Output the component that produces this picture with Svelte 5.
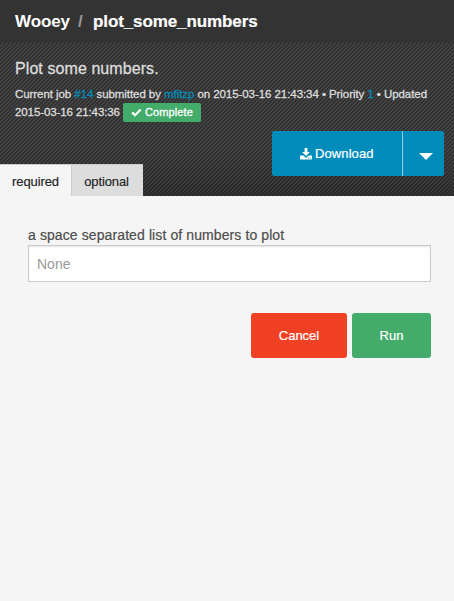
<script>
  let tab = $state('required');
</script>

<div class="page">
  <nav><b class="brand">Wooey</b><b class="slash">/</b><b class="name">plot_some_numbers</b></nav>
  <header>
    <h1>Plot some numbers.</h1>
    <p class="line1">Current job <a>#14</a> submitted by <a>mfitzp</a> on 2015-03-16 21:43:34 • Priority <a>1</a> • Updated</p>
    <p class="line2"><span>2015-03-16 21:43:36</span><span class="label"><svg width="11" height="9" viewBox="0 0 11 9"><path d="M1.2 4.4 4 7.2 9.7 1.5" fill="none" stroke="#fff" stroke-width="2.3" /></svg><span>Complete</span></span></p>
    <div class="download">
      <button class="main"><svg width="12" height="12" viewBox="0 0 12 12"><path fill="#fff" d="M4.6 0h2.8v4h2.5L6 8 2.1 4h2.5zM.5 7.6h2.9L6 10l2.6-2.4h2.9q.5 0 .5.5v2.7q0 .6-.6.6H.6q-.6 0-.6-.6V8.1q0-.5.5-.5z" /><path fill="#008cba" d="M8 9.6h.9v.8H8zM9.8 9.6h.9v.8h-.9z" /></svg><span>Download</span></button>
      <button class="more" aria-label="More"><i></i></button>
    </div>
    <div class="tabs">
      <button class:active={tab === 'required'} class="required" onclick={() => (tab = 'required')}>required</button>
      <button class:active={tab === 'optional'} class="optional" onclick={() => (tab = 'optional')}>optional</button>
    </div>
  </header>
  <main>
    <label for="numbers">a space separated list of numbers to plot</label>
    <input id="numbers" placeholder="None" />
    <div class="actions"><button class="cancel">Cancel</button><button class="run">Run</button></div>
  </main>
</div>

<style>
  :global(body) { margin: 0; background: #f5f5f5; }
  .page { font-family: "Liberation Sans", Arial, sans-serif; min-height: 601px; background: #f5f5f5; }
  .page * { box-sizing: border-box; }
  button { font: inherit; border: 0; padding: 0; margin: 0; color: #fff; white-space: nowrap; }
  nav { height: 43px; background: #333; color: #fff; font-size: 17px; line-height: 43px; padding-left: 15px; display: flex; white-space: nowrap; }
  .brand { width: 63px; letter-spacing: -.1px; }
  .slash { width: 15px; color: #999; }
  .name { letter-spacing: -.1px; -webkit-text-stroke: .2px; }
  header {
    height: 153px; padding: 15px 10px 0 0; display: flex; flex-direction: column; color: #ddd;
    background:
      linear-gradient(to bottom, transparent 70%, rgba(0, 0, 0, .18)),
      linear-gradient(135deg, #303030 25%, #434343 25% 50%, #303030 50% 75%, #434343 75%) 0 0 / 4px 4px;
  }
  h1 { margin: 0 0 0 15px; height: 22px; line-height: 22px; font-size: 16px; font-weight: 400; letter-spacing: .08px; -webkit-text-stroke: .3px; }
  p { margin: 0 0 0 15px; font-size: 11.5px; white-space: nowrap; letter-spacing: -.065px; -webkit-text-stroke: .3px; }
  .line1 { height: 18px; line-height: 18px; margin-top: 5px; }
  .line2 { height: 18px; display: flex; align-items: center; }
  .line2 > span:first-child { width: 108px; letter-spacing: -.1px; }
  a { color: #008cba; }
  .label { height: 19px; width: 78px; background: #43ac6a; border-radius: 2px; color: #fff; display: flex; align-items: center; padding-left: 8px; gap: 3px; font-size: 11px; letter-spacing: .1px; }
  .download { align-self: flex-end; display: flex; height: 45px; width: 172px; margin-top: 10px; border-radius: 3px; overflow: hidden; background: #008cba; flex: none; }
  .main { width: 130px; background: #008cba; display: flex; align-items: center; padding-left: 28px; gap: 3px; font-size: 13px; letter-spacing: .1px; -webkit-text-stroke: .2px; }
  .more { width: 42px; border-left: 1px solid #8cc9df; background: #008cba; display: flex; justify-content: center; padding: 22px 0 0 4px; }
  .more i { width: 0; height: 0; border: 7px solid transparent; border-top-color: #fff; border-bottom: 0; }
  .tabs { display: flex; height: 32px; width: 143px; margin-top: -12px; flex: none; border-top: 1px solid #ccc; font-size: 13px; }
  .tabs button { color: #222; background: #ddd; padding-top: 2px; letter-spacing: -.1px; -webkit-text-stroke: .15px; }
  .tabs .active { background: #f5f5f5; }
  .required { width: 71px; }
  .tabs .optional { width: 72px; padding-right: 2px; border-left: 1px solid #ccc; }
  main { padding: 30px 23px 0 28px; display: flex; flex-direction: column; }
  label { height: 19px; line-height: 19px; font-size: 14px; color: #4d4d4d; white-space: nowrap; letter-spacing: .1px; -webkit-text-stroke: .2px; }
  input { height: 37px; border: 1px solid #ccc; border-radius: 0; background: #fff; padding: 1px 8px 0; font: 14px "Liberation Sans", Arial, sans-serif; box-shadow: inset 0 1px 2px rgba(0, 0, 0, .1); }
  input::placeholder { color: #999; }
  .actions { display: flex; justify-content: flex-end; gap: 5px; margin-top: 31px; }
  .actions button { height: 45px; border-radius: 3px; font-size: 13px; -webkit-text-stroke: .2px; }
  .cancel { width: 96px; background: #f04124; }
  .run { width: 79px; background: #43ac6a; }
</style>
